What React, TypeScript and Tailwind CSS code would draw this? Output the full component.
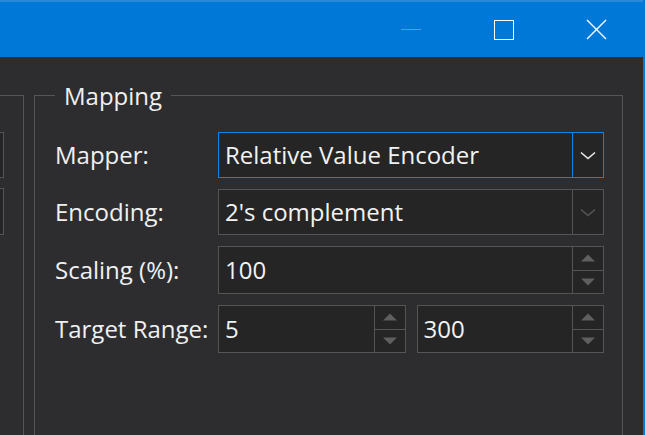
import React from 'react';

// Dark settings window: title bar + "Mapping" group with combos and spinners

const font = { fontFamily: '"Open Sans", "Noto Sans", sans-serif' };

function Chevron({ color }: { color: string }) {
  return (
    <svg width="16" height="9" viewBox="0 0 16 9" fill="none">
      <path d="M1 1.5 L8 7.5 L15 1.5" stroke={color} strokeWidth="1.6" />
    </svg>
  );
}

function Triangle({ up }: { up?: boolean }) {
  return (
    <svg width="16" height="8" viewBox="0 0 16 8">
      <path d={up ? 'M1 7.5 L8 0.5 L15 7.5 Z' : 'M1 0.5 L8 7.5 L15 0.5 Z'} fill="#5f5f5f" />
    </svg>
  );
}

function ComboBox({ value, focused }: { value: string; focused?: boolean }) {
  const border = focused ? 'border-[#0a84e8]' : 'border-[#555555]';
  return (
    <div className={`flex h-[46px] border ${border} bg-[#252526]`}>
      <div className="flex-1 flex items-center pl-[6px] text-[24px] leading-[24px] text-[#f2f2f2]">
        {value}
      </div>
      <div className={`w-[31px] border-l ${border} flex items-center justify-center`}>
        <Chevron color={focused ? '#e8e8e8' : '#565656'} />
      </div>
    </div>
  );
}

function Spinner({ value }: { value: string }) {
  return (
    <div className="flex h-[48px] border border-[#555555] bg-[#252526]">
      <div className="flex-1 flex items-center pl-[6px] text-[24px] leading-[24px] text-[#f2f2f2]">
        {value}
      </div>
      <div className="w-[31px] border-l border-[#555555] flex flex-col">
        <div className="flex-1 flex items-center justify-center border-b border-[#555555]">
          <Triangle up />
        </div>
        <div className="flex-1 flex items-center justify-center">
          <Triangle />
        </div>
      </div>
    </div>
  );
}

function Label({ children }: { children: React.ReactNode }) {
  return (
    <div className="flex items-center text-[24px] leading-[24px] text-[#f0f0f0] whitespace-nowrap">
      {children}
    </div>
  );
}

export default function App() {
  return (
    <div
      className="w-[645px] h-[435px] overflow-hidden flex flex-col bg-[#2d2d30] border-r-2 border-[#0078d7]"
      style={font}
    >
      {/* Title bar */}
      <div className="h-[57px] shrink-0 bg-[#0078d7] border-t-2 border-[#2a88da] flex justify-end">
        <div className="w-[93px] flex items-center justify-center">
          <div className="w-[20px] h-[1px] bg-[#4c9ce6]" />
        </div>
        <div className="w-[93px] flex items-center justify-center">
          <div className="w-[20px] h-[20px] border-[1.5px] border-white" />
        </div>
        <div className="w-[93px] flex items-center justify-center">
          <svg width="21" height="21" viewBox="0 0 21 21">
            <path d="M1 1 L20 20 M20 1 L1 20" stroke="white" strokeWidth="1.4" />
          </svg>
        </div>
      </div>

      {/* Body */}
      <div className="flex-1 flex pt-[38px]">
        {/* partial group on the left */}
        <div className="w-[24px] shrink-0 border-t border-r border-[#555555] pt-[36px] flex flex-col gap-[10px]">
          <div className="w-[4px] h-[46px] border-y border-r border-[#555555] bg-[#252526]" />
          <div className="w-[4px] h-[47px] border-y border-r border-[#555555] bg-[#252526]" />
        </div>

        {/* Mapping group */}
        <div className="relative ml-[10px] w-[589px] shrink-0 border-t border-x border-[#555555] pt-[36px] pl-[20px] pr-[18px]">
          <span className="absolute -top-[12px] left-[20px] px-[9px] bg-[#2d2d30] text-[24px] leading-[24px] text-[#f0f0f0]">
            Mapping
          </span>
          <div className="grid grid-cols-[163px_1fr] gap-y-[11px]">
            <Label>Mapper:</Label>
            <ComboBox value="Relative Value Encoder" focused />
            <Label>Encoding:</Label>
            <ComboBox value="2's complement" />
            <Label>Scaling (%):</Label>
            <Spinner value="100" />
            <Label>Target Range:</Label>
            <div className="grid grid-cols-2 gap-[11px]">
              <Spinner value="5" />
              <Spinner value="300" />
            </div>
          </div>
        </div>
      </div>
    </div>
  );
}
